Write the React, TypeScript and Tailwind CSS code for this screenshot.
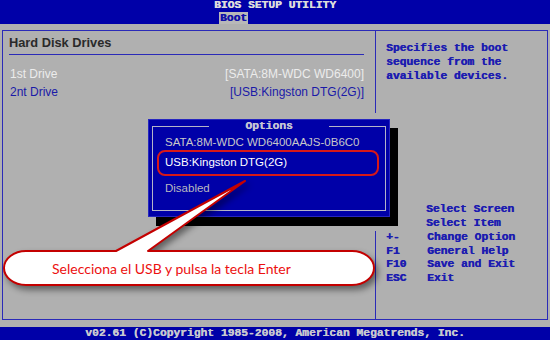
const mono = "font-['Liberation_Mono','Courier_New',monospace] font-bold [text-shadow:0.4px_0_0_currentColor]";
const sans = "font-['Liberation_Sans',Arial,sans-serif]";

const KEYS_FREE = ["Select Screen", "Select Item"];
const KEYS = [
  { key: "+-", label: "Change Option" },
  { key: "F1", label: "General Help" },
  { key: "F10", label: "Save and Exit" },
  { key: "ESC", label: "Exit" },
];

function KeyRow({ k, label }: { k: string; label: string }) {
  return (
    <div className="flex h-[13.8px] leading-[13.8px]">
      <span className="w-[51px] pl-[10px] shrink-0">{k}</span>
      <span>{label}</span>
    </div>
  );
}

function OptionsPopup() {
  return (
    <div className="absolute left-[148px] top-[119px] w-[242px] h-[98px] bg-[#0000a8] border border-[#2626c0] shadow-[8px_9px_0_#000] px-[3px]">
      <fieldset className="h-[91px] border border-[#b4b4c8]">
        <legend className={`${mono} mx-auto px-[36px] text-[11.3px] leading-[12px] text-[#c4c4d4]`}>
          Options
        </legend>
        <div className={`${sans} text-[11.5px] pl-[12px] pt-[3px] flex flex-col`}>
          <div className="h-[14px] leading-[14px] text-[#c8c8c8]">SATA:8M-WDC WD6400AAJS-0B6C0</div>
          <div className="mt-[1px] -ml-[8px] w-[222px] h-[26px] border-2 border-[#d81818] rounded-[8px] pl-[6px] flex items-center text-white">
            USB:Kingston DTG(2G)
          </div>
          <div className="mt-[5px] h-[14px] leading-[14px] text-[#b8b8c0]">Disabled</div>
        </div>
      </fieldset>
    </div>
  );
}

function Callout() {
  return (
    <div className="absolute left-0 top-[175px] w-[390px] h-[125px]">
      <svg width="390" height="125" viewBox="0 0 390 125" className="drop-shadow-[3px_4px_3px_rgba(0,0,0,0.45)]">
        <path
          d="M 26 76 L 116 76 L 245 6 L 148 76 L 352 76 A 22 17 0 0 1 352 110 L 26 110 A 22 17 0 0 1 26 76 Z"
          fill="#ffffff"
          stroke="#c40000"
          strokeWidth="2"
          strokeLinejoin="round"
        />
      </svg>
      <div className="absolute left-[6px] top-[76px] w-[368px] h-[34px] flex items-center pl-[46px] font-['Lato','Open_Sans',sans-serif] text-[14px] text-[#ec1010]">
        Selecciona el USB y pulsa la tecla Enter
      </div>
    </div>
  );
}

export default function App() {
  return (
    <div className="relative w-[550px] h-[340px] overflow-hidden flex flex-col bg-[#b0b0b0]">
      <header className="h-[24px] shrink-0 bg-[#0000a8] flex flex-col">
        <div className={`${mono} h-[12px] -mt-[1px] text-center text-[11.3px] leading-[12px] text-[#dcdcdc]`}>
          BIOS SETUP UTILITY
        </div>
        <div className="flex pl-[219px] mt-[1px]">
          <span className={`${mono} h-[12px] w-[29px] bg-[#b8b8b8] text-[11.3px] leading-[12px] text-[#1010a8] text-center`}>
            Boot
          </span>
        </div>
      </header>

      <div className="flex-1 pt-[6px] pb-[7px] px-[2px]">
        <div className="h-full border border-[#2a2ab8] flex">
          <section className={`${sans} w-[372px] pl-[6px] pr-[11px] pt-[4px]`}>
            <h2 className="text-[12.8px] font-bold text-[#2a2a2a] leading-[16px] pb-[3px] border-b border-[#2a2ab8]">
              Hard Disk Drives
            </h2>
            <div className="mt-[10px] text-[12px] pl-[1px]">
              <div className="flex justify-between h-[18px] leading-[18px] text-[#ececec]">
                <span>1st Drive</span>
                <span>[SATA:8M-WDC WD6400]</span>
              </div>
              <div className="flex justify-between h-[18px] leading-[18px] text-[#1a1aa8]">
                <span>2nt Drive</span>
                <span>[USB:Kingston DTG(2G)]</span>
              </div>
            </div>
          </section>

          <aside className={`${mono} flex-1 flex flex-col text-[11.3px] text-[#1c1cb0]`}>
            <div className="h-[82px] border-l border-[#2a2ab8] pl-[10px] pt-[9.5px] leading-[14px]">
              <p>Specifies the boot</p>
              <p>sequence from the</p>
              <p>available devices.</p>
            </div>
            <div className="mt-auto">
              {KEYS_FREE.map((label) => (
                <KeyRow key={label} k="" label={label} />
              ))}
              <div className="border-l border-[#2a2ab8] pb-[33px]">
                {KEYS.map((r) => (
                  <KeyRow key={r.key} k={r.key} label={r.label} />
                ))}
              </div>
            </div>
          </aside>
        </div>
      </div>

      <footer className={`${mono} h-[13px] shrink-0 bg-[#0000a8] text-center text-[11.3px] leading-[13px] text-[#c8c8d0]`}>
        v02.61 (C)Copyright 1985-2008, American Megatrends, Inc.
      </footer>

      <OptionsPopup />
      <Callout />
    </div>
  );
}
